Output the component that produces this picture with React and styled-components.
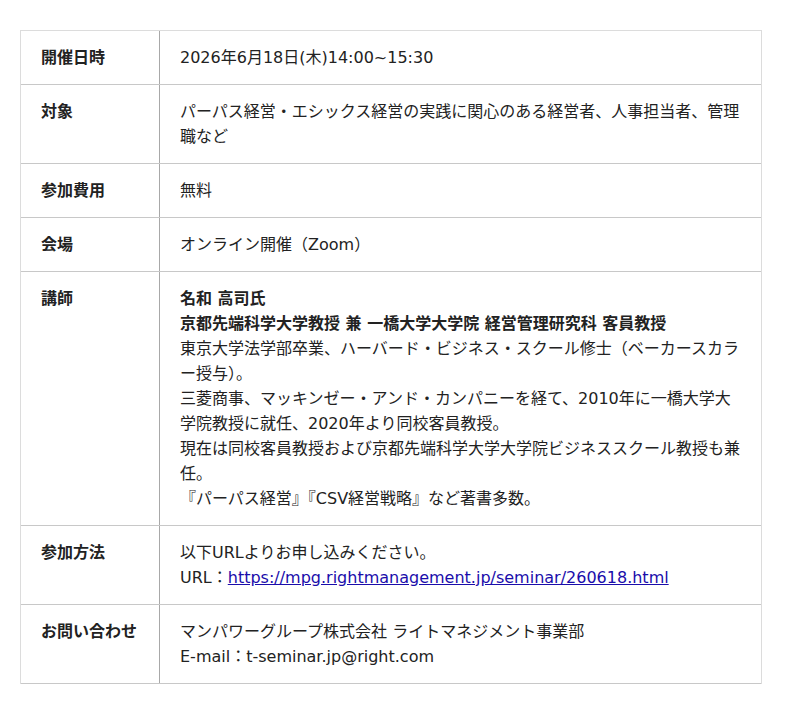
import React from "react";
import styled, { createGlobalStyle } from "styled-components";

const Global = createGlobalStyle`
  html, body { margin: 0; padding: 0; background: #fff; }
  body {
    font-family: "DejaVu Sans", "Noto Sans CJK JP", sans-serif;
    color: #222;
  }
`;

const Page = styled.div`
  padding: 30px 38px 30px 20px;
`;

const Table = styled.div`
  width: 742px;
  border: 1px solid #dcdcdc;
  border-bottom: none;
  box-sizing: border-box;
`;

const Row = styled.div`
  display: grid;
  grid-template-columns: 139px 1fr;
  border-bottom: 1px solid #c8c8c8;
`;

const Label = styled.div`
  padding: 14px 20px;
  border-right: 1px solid #a8a8a8;
  font-size: 16px;
  line-height: 25px;
  font-weight: bold;
  color: #222;
`;

const Cell = styled.div`
  padding: 14px 20px;
  font-size: 16px;
  line-height: 25px;
  color: #222;
`;

const Line = styled.div`
  font-weight: ${(p) => (p.$bold ? "bold" : "normal")};
`;

const Link = styled.a`
  color: #1a0dab;
  text-decoration: underline;
`;

const rows = [
  { label: "開催日時", lines: [{ t: "2026年6月18日(木)14:00~15:30" }] },
  {
    label: "対象",
    lines: [{ t: "パーパス経営・エシックス経営の実践に関心のある経営者、人事担当者、管理職など" }],
  },
  { label: "参加費用", lines: [{ t: "無料" }] },
  { label: "会場", lines: [{ t: "オンライン開催（Zoom）" }] },
  {
    label: "講師",
    lines: [
      { t: "名和 高司氏", b: true },
      { t: "京都先端科学大学教授 兼 一橋大学大学院 経営管理研究科 客員教授", b: true },
      { t: "東京大学法学部卒業、ハーバード・ビジネス・スクール修士（ベーカースカラー授与）。" },
      { t: "三菱商事、マッキンゼー・アンド・カンパニーを経て、2010年に一橋大学大学院教授に就任、2020年より同校客員教授。" },
      { t: "現在は同校客員教授および京都先端科学大学大学院ビジネススクール教授も兼任。" },
      { t: "『パーパス経営』『CSV経営戦略』など著書多数。" },
    ],
  },
  {
    label: "参加方法",
    lines: [
      { t: "以下URLよりお申し込みください。" },
      {
        t: (
          <>
            URL：
            <Link href="#">https://mpg.rightmanagement.jp/seminar/260618.html</Link>
          </>
        ),
      },
    ],
  },
  {
    label: "お問い合わせ",
    lines: [
      { t: "マンパワーグループ株式会社 ライトマネジメント事業部" },
      { t: "E-mail：t-seminar.jp@right.com" },
    ],
  },
];

export default function App() {
  return (
    <>
      <Global />
      <Page>
        <Table>
          {rows.map((r, i) => (
            <Row key={i}>
              <Label>{r.label}</Label>
              <Cell>
                {r.lines.map((l, j) => (
                  <Line key={j} $bold={l.b}>
                    {l.t}
                  </Line>
                ))}
              </Cell>
            </Row>
          ))}
        </Table>
      </Page>
    </>
  );
}
